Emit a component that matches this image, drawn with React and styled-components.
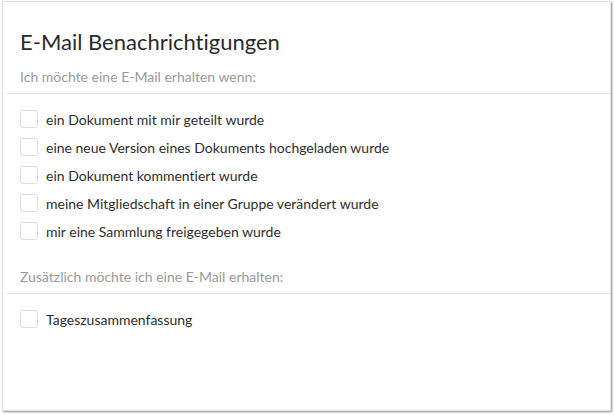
import styled, { createGlobalStyle } from "styled-components";

const GlobalStyle = createGlobalStyle`
  html, body {
    margin: 0;
    padding: 0;
    background: #ffffff;
  }
  body {
    font-family: Lato, "Open Sans", sans-serif;
    font-variant-ligatures: none;
  }
`;

const Page = styled.div`
  width: 614px;
  height: 415px;
  padding: 1px 3px 4px 2px;
  box-sizing: border-box;
`;

const Card = styled.section`
  height: 100%;
  box-sizing: border-box;
  background: #fff;
  border: 1px solid #e2e2e2;
  box-shadow: 1px 1px 2px rgba(0, 0, 0, 0.45);
  padding: 27px 0 0 4px;
`;

const Title = styled.h2`
  margin: 0 0 13px 13px;
  font-size: 22px;
  font-weight: 400;
  color: #2b2b2b;
  line-height: 26px;
`;

const SectionLabel = styled.div`
  margin-left: 13px;
  font-size: 14px;
  color: #9a9a9a;
  line-height: 18px;
  padding-bottom: 7px;
`;

const Divider = styled.hr`
  margin: 0;
  border: 0;
  border-top: 1px solid #e0e0e0;
`;

const List = styled.ul`
  list-style: none;
  margin: 0;
  padding: ${(p) => p.$pad};
  display: flex;
  flex-direction: column;
  gap: 10px;
`;

const Row = styled.li`
  display: flex;
  align-items: center;
  gap: 8px;
  padding-left: 13px;
  height: 18px;
  font-size: 14px;
  color: #2e2e2e;
`;

const Box = styled.span`
  width: 16px;
  height: 16px;
  border: 1px solid #dcdcdc;
  border-radius: 3px;
  background: #fff;
  flex: none;
`;

const events = [
  "ein Dokument mit mir geteilt wurde",
  "eine neue Version eines Dokuments hochgeladen wurde",
  "ein Dokument kommentiert wurde",
  "meine Mitgliedschaft in einer Gruppe verändert wurde",
  "mir eine Sammlung freigegeben wurde",
];

export default function App() {
  return (
    <>
      <GlobalStyle />
      <Page>
        <Card>
          <Title>E-Mail Benachrichtigungen</Title>
          <SectionLabel>Ich möchte eine E-Mail erhalten wenn:</SectionLabel>
          <Divider />
          <List $pad="16px 0 28px">
            {events.map((e) => (
              <Row key={e}>
                <Box />
                {e}
              </Row>
            ))}
          </List>
          <SectionLabel>Zusätzlich möchte ich eine E-Mail erhalten:</SectionLabel>
          <Divider />
          <List $pad="16px 0 0">
            <Row>
              <Box />
              Tageszusammenfassung
            </Row>
          </List>
        </Card>
      </Page>
    </>
  );
}
